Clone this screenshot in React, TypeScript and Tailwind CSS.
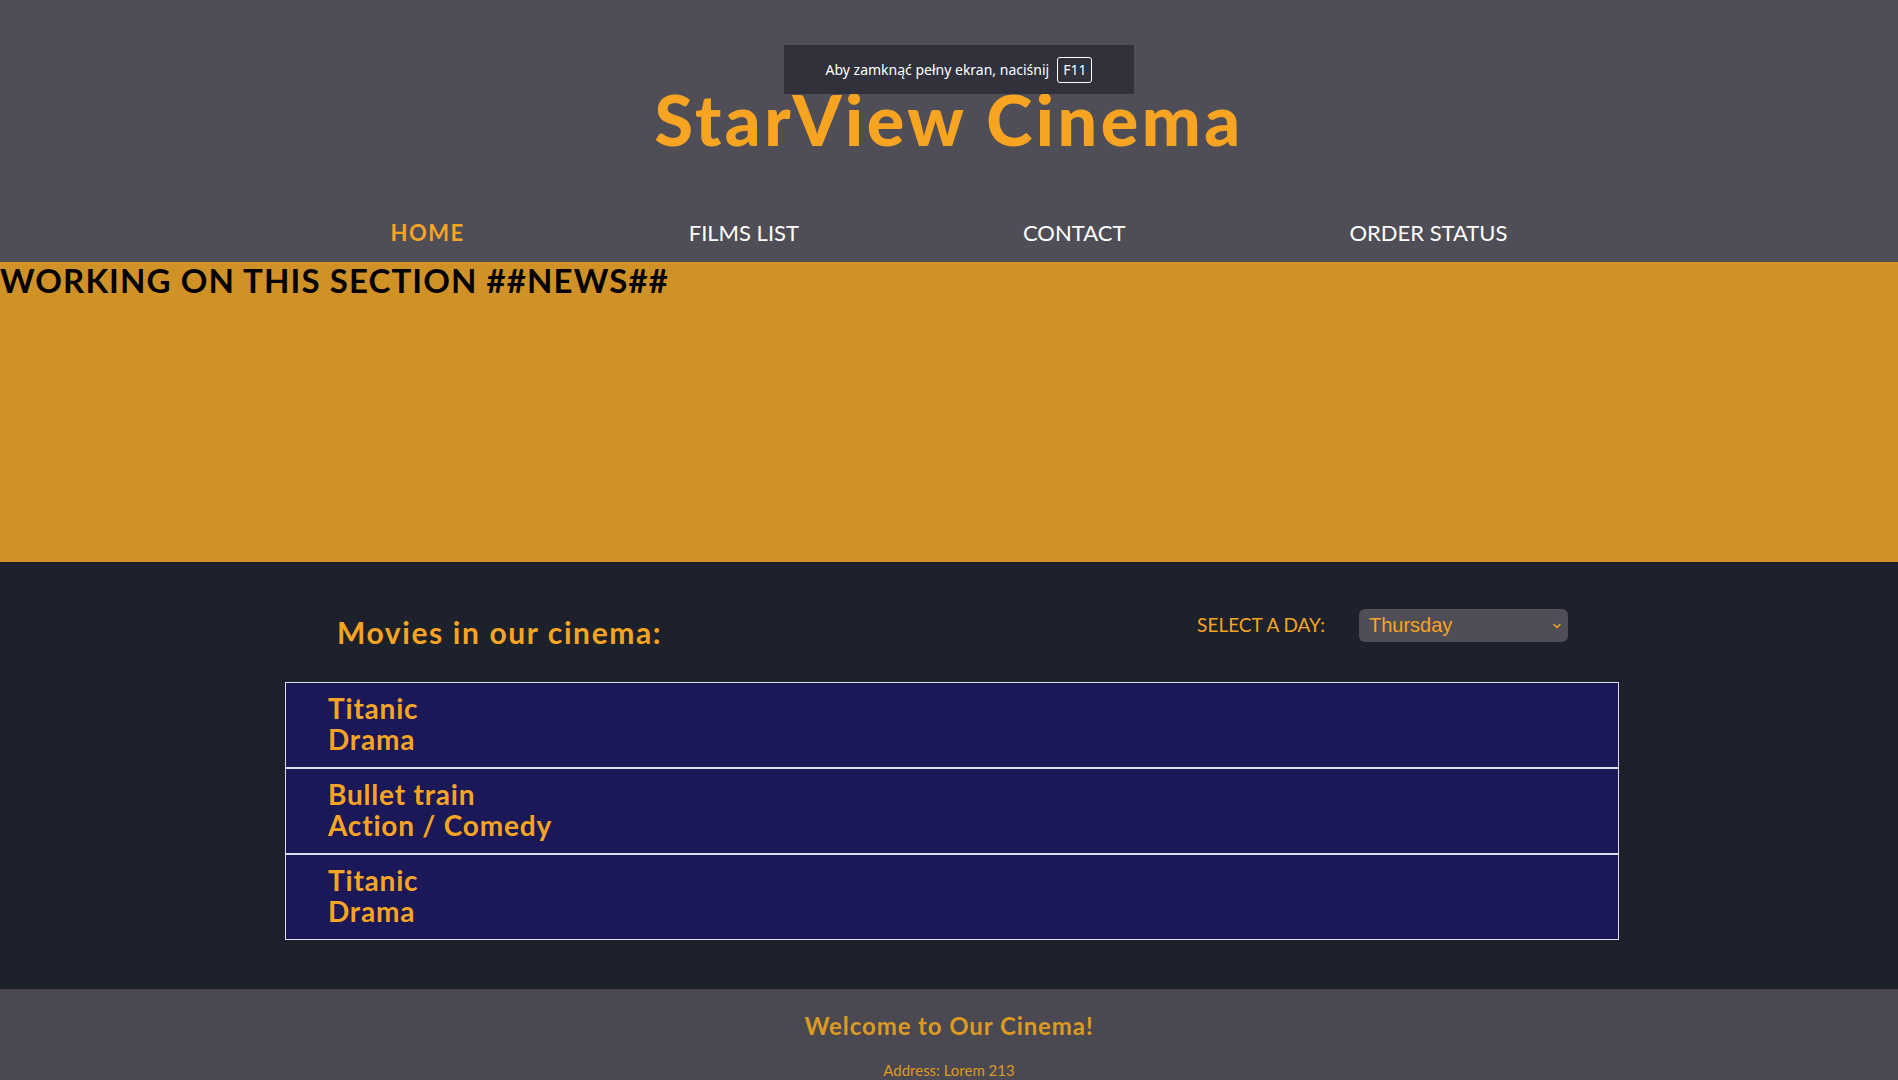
import React from 'react';
import { ChevronDown } from 'lucide-react';

const navItems = ['HOME', 'FILMS LIST', 'CONTACT', 'ORDER STATUS'];

const movies = [
  { title: 'Titanic', genre: 'Drama' },
  { title: 'Bullet train', genre: 'Action / Comedy' },
  { title: 'Titanic', genre: 'Drama' },
];

const App: React.FC = () => {
  return (
    <div className="min-h-screen bg-[#1c212b] font-['Lato',sans-serif]">
      {/* header */}
      <header className="relative h-[262px] bg-[#4f4e57] pt-[84px]">
        <h1 className="text-center text-[70px] font-black leading-none tracking-[3.5px] text-[#f7a422]">
          StarView Cinema
        </h1>
        <nav className="mt-[68px] flex justify-center gap-[224px]">
          {navItems.map((item, i) => (
            <a
              key={item}
              href="#"
              className={
                i === 0
                  ? 'text-[22px] font-bold leading-none tracking-[1.5px] text-[#f7a422]'
                  : 'text-[22px] leading-none text-white'
              }
            >
              {item}
            </a>
          ))}
        </nav>

        {/* browser fullscreen hint */}
        <div className="absolute left-[784px] top-[45px] flex h-[49px] w-[350px] items-center justify-center gap-[8px] bg-[#30313a] font-['Noto_Sans',sans-serif] text-[14px] text-white">
          <span>Aby zamknąć pełny ekran, naciśnij</span>
          <span className="rounded-[3px] border border-white px-[5px] py-[5px] leading-none">F11</span>
        </div>
      </header>

      {/* news */}
      <section className="h-[300px] bg-[#d09226] pt-[2px]">
        <h2 className="text-[33px] font-bold leading-none tracking-[1.1px] text-black">
          WORKING ON THIS SECTION ##NEWS##
        </h2>
      </section>

      {/* repertoire */}
      <section className="pb-[49px] pt-[47px]">
        <div className="ml-[285px] w-[1334px]">
          <div className="flex items-start justify-between pl-[52px] pr-[51px]">
            <h2 className="mt-[8px] text-[30px] font-bold leading-none tracking-[1.6px] text-[#f7a422]">
              Movies in our cinema:
            </h2>
            <div className="flex items-center gap-[34px]">
              <span className="text-[19px] text-[#f7a422]">SELECT A DAY:</span>
              <div className="relative h-[33px] w-[209px] rounded-[6px] bg-[#4f4e57]">
                <span className="absolute left-[10px] top-[6px] font-['Liberation_Sans',sans-serif] text-[20px] leading-none text-[#f7a422]">
                  Thursday
                </span>
                <ChevronDown
                  className="absolute right-[5px] top-[11px] text-[#f7a422]"
                  size={12}
                  strokeWidth={3}
                />
              </div>
            </div>
          </div>

          <div className="mt-[35px]">
            {movies.map((m, i) => (
              <div
                key={i}
                className="border border-[#dcdcee] bg-[#1a1856] pb-[12px] pl-[42px] pt-[10px] text-[28px] font-bold leading-[31px] tracking-[0.8px] text-[#f7a422]"
              >
                <div>{m.title}</div>
                <div>{m.genre}</div>
              </div>
            ))}
          </div>
        </div>
      </section>

      {/* footer */}
      <footer className="bg-[#4a4850] pb-[20px] pt-[25px] text-center text-[#dc9a22]">
        <h3 className="text-[24px] font-bold leading-none tracking-[0.9px]">Welcome to Our Cinema!</h3>
        <p className="mt-[25px] text-[15px] leading-none">Address: Lorem 213</p>
      </footer>
    </div>
  );
};

export default App;
